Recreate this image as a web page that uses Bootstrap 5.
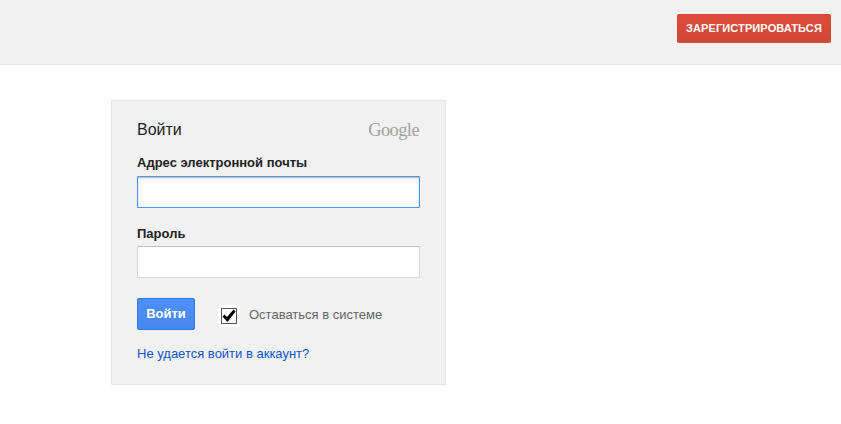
<!doctype html>
<html lang="ru">
<head>
<meta charset="utf-8">
<title>Войти</title>
<link href="https://cdn.jsdelivr.net/npm/bootstrap@5.3.0/dist/css/bootstrap.min.css" rel="stylesheet">
<style>
html,body{height:100%}
body{background:#fff;font-family:"Liberation Sans",Arial,sans-serif;font-size:13px;color:#222;overflow:hidden}
.top-strip{height:65px;background:#f1f1f1;border-bottom:1px solid #e5e5e5;padding:14px 10px 0 0}
.signup-btn{height:29px;width:154px;padding:0;font-size:11px;font-weight:700;line-height:27px;color:#fff;background:#d14836;background-image:linear-gradient(#dd4b39,#d14836);border:1px solid transparent;border-radius:2px;letter-spacing:.1px;white-space:nowrap}
.page-main{padding:35px 0 0 111px}
.login-box{width:335px;height:285px;background:#f1f1f1;border:1px solid #e5e5e5;padding:19px 25px 0}
.box-title{font-size:16px;line-height:20px;font-weight:400;color:#222;margin:0}
.g-word{font-family:"Liberation Serif",serif;font-size:18.5px;line-height:20px;color:#a3a3a3;letter-spacing:-.6px;margin-right:1px}
.f-label{display:block;font-weight:700;font-size:13px;line-height:16px;color:#222;margin:0}
.f-input{display:block;width:283px;height:32px;padding:1px 8px;background:#fff;border:1px solid #d9d9d9;border-top-color:silver;border-radius:1px;outline:0;box-shadow:none}
.f-input.is-on{border-color:#4d90fe;box-shadow:inset 0 1px 2px rgba(0,0,0,.3);margin-top:5px}
.f-input.is-off{margin-top:4px}
.field-a{margin-top:15px}
.field-b{margin-top:18px}
.act-row{margin-top:20px}
.enter-btn{width:58px;height:32px;padding:0;font-size:13px;font-weight:700;color:#fff;background:#4d90fe;background-image:linear-gradient(#4d90fe,#4787ed);border:1px solid #3079ed;border-radius:2px}
.tick-box{width:22px;height:22px;background:#fff;margin:4px 0 0 23px}
.tick-box svg{display:block}
.stay-text{margin:2px 0 0 9px;color:#666;font-size:13px}
.help-link{display:block;margin-top:16px;font-size:13px;line-height:16px;color:#15c;text-decoration:none}
</style>
</head>
<body>
<header class="top-strip d-flex justify-content-end align-items-start">
<button type="button" class="signup-btn">ЗАРЕГИСТРИРОВАТЬСЯ</button>
</header>
<main class="page-main">
<form class="login-box">
<div class="d-flex justify-content-between align-items-center">
<h1 class="box-title">Войти</h1>
<span class="g-word">Google</span>
</div>
<div class="field-a">
<label class="f-label" for="em">Адрес электронной почты</label>
<input id="em" class="f-input is-on" type="text">
</div>
<div class="field-b">
<label class="f-label" for="pw">Пароль</label>
<input id="pw" class="f-input is-off" type="password">
</div>
<div class="act-row d-flex align-items-center">
<button type="button" class="enter-btn">Войти</button>
<span class="tick-box d-flex align-items-center justify-content-center">
<svg width="16" height="16" viewBox="0 0 16 16"><rect x=".5" y=".5" width="15" height="15" fill="#fff" stroke="#555"/><path d="M1.5 8.5L3.5 6.5 6 9 12.5 1.5 14.5 3.5 6.5 14z" fill="#000"/></svg>
</span>
<span class="stay-text">Оставаться в системе</span>
</div>
<a class="help-link" href="#">Не удается войти в аккаунт?</a>
</form>
</main>
<script src="https://cdn.jsdelivr.net/npm/bootstrap@5.3.0/dist/js/bootstrap.bundle.min.js"></script>
</body>
</html>
